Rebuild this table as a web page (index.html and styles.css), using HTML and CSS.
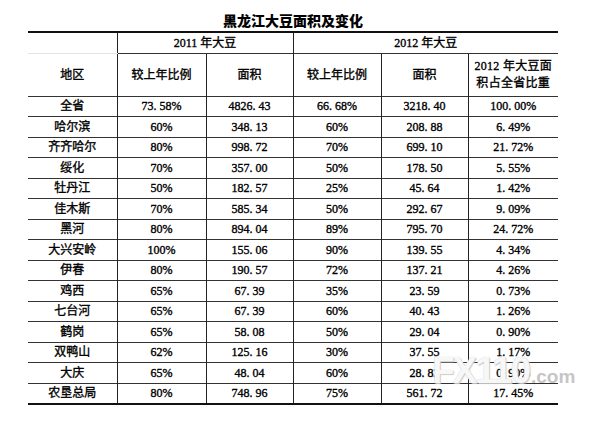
FILE: index.html
```html
<!DOCTYPE html>
<html lang="zh-CN">
<head>
<meta charset="utf-8">
<title>黑龙江大豆面积及变化</title>
<link rel="stylesheet" href="styles.css">
</head>
<body>
<div class="page">
  <h1 class="title">黑龙江大豆面积及变化</h1>
  <table class="data">
    <colgroup>
      <col class="c1"><col class="c2"><col class="c3"><col class="c4"><col class="c5"><col class="c6">
    </colgroup>
    <thead>
      <tr class="h1">
        <th class="first blank"></th>
        <th colspan="2">2011 年大豆</th>
        <th colspan="3">2012 年大豆</th>
      </tr>
      <tr class="h2">
        <th class="first">地区</th>
        <th>较上年比例</th>
        <th>面积</th>
        <th>较上年比例</th>
        <th>面积</th>
        <th class="two">2012 年大豆面<br>积占全省比重</th>
      </tr>
    </thead>
    <tbody>
      <tr><td class="first">全省</td><td>73. 58%</td><td>4826. 43</td><td>66. 68%</td><td>3218. 40</td><td>100. 00%</td></tr>
      <tr><td class="first">哈尔滨</td><td>60%</td><td>348. 13</td><td>60%</td><td>208. 88</td><td>6. 49%</td></tr>
      <tr><td class="first">齐齐哈尔</td><td>80%</td><td>998. 72</td><td>70%</td><td>699. 10</td><td>21. 72%</td></tr>
      <tr><td class="first">绥化</td><td>70%</td><td>357. 00</td><td>50%</td><td>178. 50</td><td>5. 55%</td></tr>
      <tr><td class="first">牡丹江</td><td>50%</td><td>182. 57</td><td>25%</td><td>45. 64</td><td>1. 42%</td></tr>
      <tr><td class="first">佳木斯</td><td>70%</td><td>585. 34</td><td>50%</td><td>292. 67</td><td>9. 09%</td></tr>
      <tr><td class="first">黑河</td><td>80%</td><td>894. 04</td><td>89%</td><td>795. 70</td><td>24. 72%</td></tr>
      <tr><td class="first">大兴安岭</td><td>100%</td><td>155. 06</td><td>90%</td><td>139. 55</td><td>4. 34%</td></tr>
      <tr><td class="first">伊春</td><td>80%</td><td>190. 57</td><td>72%</td><td>137. 21</td><td>4. 26%</td></tr>
      <tr><td class="first">鸡西</td><td>65%</td><td>67. 39</td><td>35%</td><td>23. 59</td><td>0. 73%</td></tr>
      <tr><td class="first">七台河</td><td>65%</td><td>67. 39</td><td>60%</td><td>40. 43</td><td>1. 26%</td></tr>
      <tr><td class="first">鹤岗</td><td>65%</td><td>58. 08</td><td>50%</td><td>29. 04</td><td>0. 90%</td></tr>
      <tr><td class="first">双鸭山</td><td>62%</td><td>125. 16</td><td>30%</td><td>37. 55</td><td>1. 17%</td></tr>
      <tr><td class="first">大庆</td><td>65%</td><td>48. 04</td><td>60%</td><td>28. 82</td><td>0. 90%</td></tr>
      <tr><td class="first">农垦总局</td><td>80%</td><td>748. 96</td><td>75%</td><td>561. 72</td><td>17. 45%</td></tr>
    </tbody>
  </table>
  <div class="watermark"><span class="wm-big">FX110</span><span class="wm-small">.com</span></div>
</div>
</body>
</html>
```

FILE: styles.css
```css
html, body {
  margin: 0;
  padding: 0;
  background: #fff;
}

.page {
  position: relative;
  width: 613px;
  height: 425px;
  overflow: hidden;
  color: #000;
  font-family: "Liberation Serif", "Noto Sans CJK SC", serif;
}

.title {
  margin: 0 0 0 28px;
  width: 530px;
  height: 31px;
  padding-top: 10px;
  box-sizing: border-box;
  text-align: center;
  font-family: "Noto Sans CJK SC", sans-serif;
  font-size: 14px;
  font-weight: 900;
  line-height: 20px;
  color: #000;
}

.data {
  margin-left: 28px;
  width: 530px;
  table-layout: fixed;
  border-collapse: collapse;
  font-size: 12px;
  line-height: 14px;
  border-top: 2px solid #111;
  border-bottom: 2px solid #111;
}

.c1 { width: 89px; }
.c2 { width: 89px; }
.c3 { width: 87px; }
.c4 { width: 88px; }
.c5 { width: 87px; }
.c6 { width: 90px; }

.data th,
.data td {
  padding: 0;
  text-align: center;
  vertical-align: middle;
  font-weight: normal;
  border-left: 1px solid #222;
  border-top: 1px solid #333;
  white-space: nowrap;
  -webkit-text-stroke: 0.35px #000;
}

.data .first {
  border-left: none;
}

.data tr.h1 th {
  border-top: 2px solid #111;
}

.data .h1 {
  height: 21px;
}

.data .h1 .blank {
  border-bottom: 1px solid #e4e4e4;
}

.data .h2 {
  height: 43px;
}

.data .h2 .two {
  line-height: 17px;
  letter-spacing: 0.3px;
}

.data tbody tr {
  height: 20.5px;
}

.watermark {
  position: absolute;
  left: 432px;
  top: 351px;
  display: flex;
  align-items: baseline;
  gap: 2px;
  pointer-events: none;
}

.wm-big {
  font-family: "Liberation Sans", sans-serif;
  font-weight: bold;
  font-size: 37px;
  letter-spacing: -2px;
  line-height: 40px;
  color: rgba(255, 255, 255, 0.88);
  text-shadow: 0 0 1px #c0c0c0, 1px 1px 1px #cccccc;
}

.wm-small {
  font-family: "Liberation Sans", sans-serif;
  font-weight: bold;
  font-size: 19px;
  color: #c6c6c6;
}
```
